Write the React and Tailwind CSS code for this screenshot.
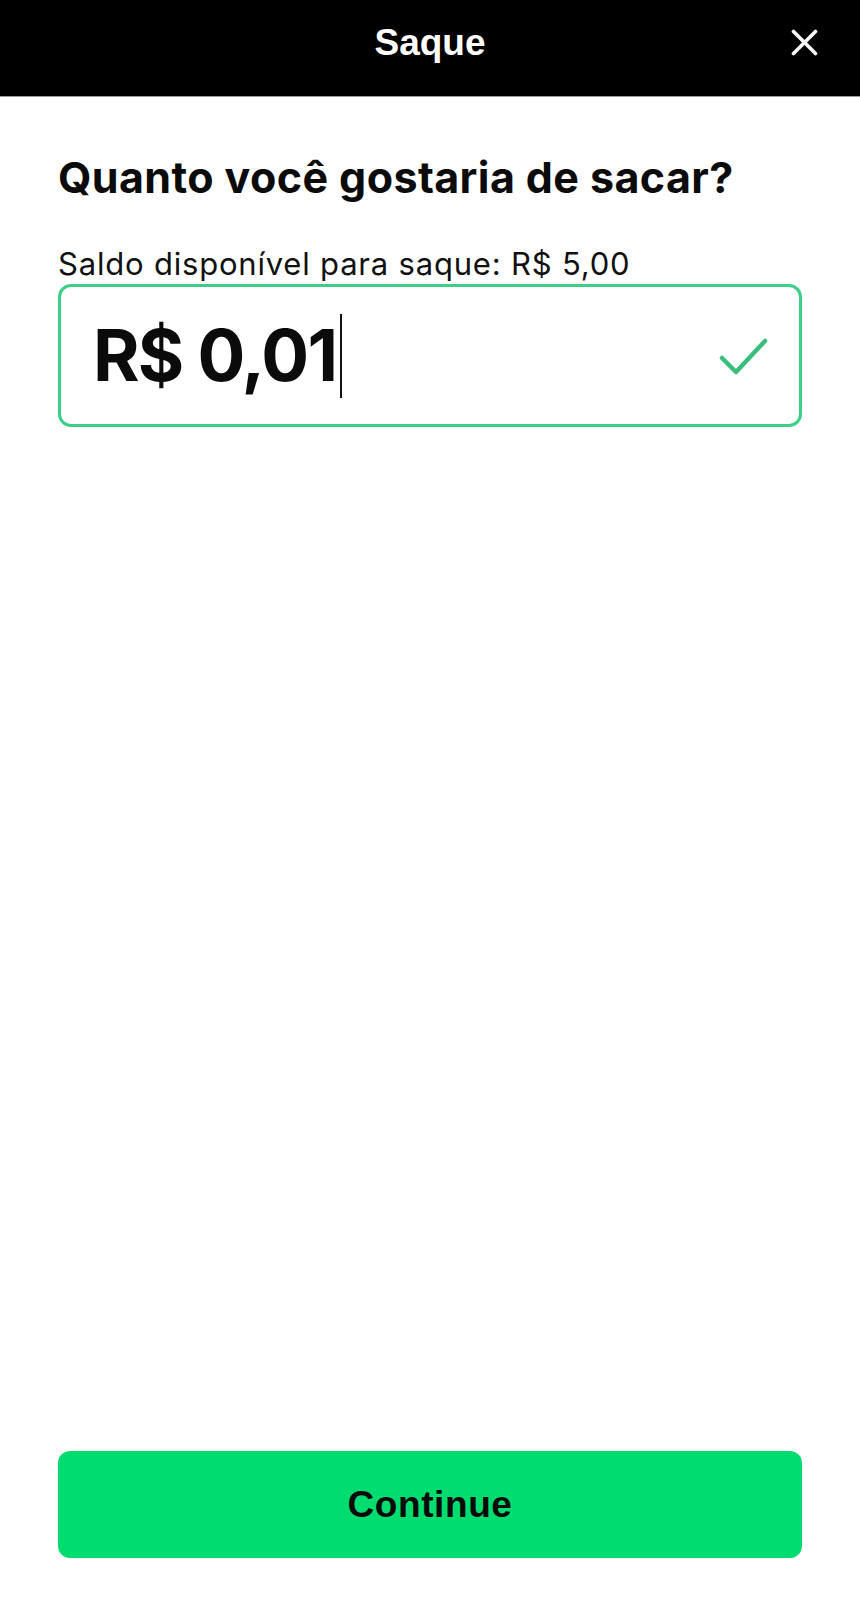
import { useState } from 'react';

export default function App() {
  const [valor] = useState('R$\u00a00,01');
  const saldo = 'R$ 5,00';

  return (
    <div className="h-[1600px] flex flex-col bg-white">
      {/* CABEÇALHO */}
      <div className="h-[97px] bg-black border-b border-[#9a9a9a] grid grid-cols-[1fr_auto_1fr] items-start pt-[24px] font-['Liberation_Sans',Arial,sans-serif]">
        <div></div>
        <h1 className="text-white font-bold text-[37px] leading-none">Saque</h1>
        <div className="flex justify-end pr-[42px] pt-[5px]">
          <svg width="27" height="27" viewBox="0 0 27 27" fill="none" stroke="white" strokeWidth="3.6" strokeLinecap="round">
            <line x1="2.5" y1="2.5" x2="24.5" y2="24.5" />
            <line x1="24.5" y1="2.5" x2="2.5" y2="24.5" />
          </svg>
        </div>
      </div>

      {/* CONTEÚDO */}
      <div className="flex-1 flex flex-col px-[58px] pt-[59px] font-['Inter','Noto_Sans',sans-serif] text-[#0b0b0b]">
        <h2 className="font-bold text-[43px] leading-none tracking-[0.4px]">Quanto você gostaria de sacar?</h2>
        <p className="mt-[49px] text-[31px] leading-none tracking-[0.8px] text-[#111]">Saldo disponível para saque: {saldo}</p>

        <div className="mt-[5px] h-[143px] border-[3px] border-[#3ccf88] rounded-[13px] flex items-center pl-[32px] pr-[31px]">
          <div className="flex-1 flex items-center">
            <span className="font-bold text-[71px] leading-none tracking-[-1.8px]">{valor}</span>
            <span className="ml-[4px] w-[2px] h-[84px] bg-[#111]"></span>
          </div>
          <svg width="50" height="40" viewBox="0 0 50 40" fill="none" stroke="#3cbd80" strokeWidth="4.5" strokeLinecap="round" strokeLinejoin="round">
            <polyline points="4,22 18,36 47,5" />
          </svg>
        </div>

        <div className="flex-1"></div>

        <button className="mb-[42px] h-[107px] w-full rounded-[12px] bg-[#00dc6f] text-[#0a0a0a] font-bold text-[37px] font-['Liberation_Sans',Arial,sans-serif] tracking-[0.6px]">
          Continue
        </button>
      </div>
    </div>
  );
}
